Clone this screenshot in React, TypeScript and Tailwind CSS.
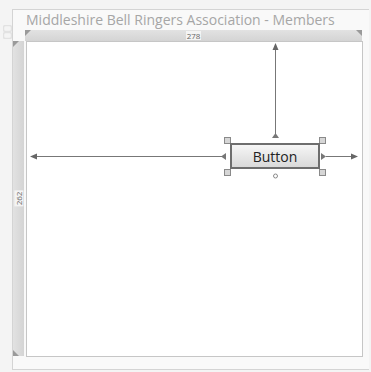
import React from "react";

export default function App() {
  return (
    <div className="relative w-[371px] h-[372px] overflow-hidden bg-[#f4f4f4] pt-[9px] pl-[12px]" style={{ fontFamily: '"Open Sans", "Noto Sans", sans-serif' }}>
      {/* faint side icon */}
      <svg className="absolute left-[3px] top-[25px]" width="9" height="14" viewBox="0 0 9 14">
        <rect x="0.5" y="0.5" width="8" height="6" rx="2" fill="none" stroke="#e2e2e2" strokeWidth="1.5" />
        <rect x="0.5" y="7.5" width="8" height="6" rx="2" fill="none" stroke="#e2e2e2" strokeWidth="1.5" />
      </svg>
      <div className="flex flex-col w-[357px] h-[361px] border-l border-t border-b border-[#d4d4d4] bg-[#f9f9f9]">
        <div className="h-[20px] pl-[13px] text-[14px] leading-[20px] text-[#a6a6a6] whitespace-nowrap">
          Middleshire Bell Ringers Association - Members
        </div>
        <div className="flex">
          <div className="w-[12px]" />
          <div className="relative w-[337px] h-[11px] bg-gradient-to-b from-[#e2e2e2] to-[#d4d4d4] flex items-center justify-center">
            <svg className="absolute left-0 top-0" width="6" height="6" viewBox="0 0 6 6">
              <polygon points="0,0 6,0 0,6" fill="#9a9a9a" />
            </svg>
            <svg className="absolute right-0 top-0" width="6" height="6" viewBox="0 0 6 6">
              <polygon points="0,0 6,0 6,6" fill="#9a9a9a" />
            </svg>
            <span className="bg-[#f4f4f4] px-[1px] text-[8px] leading-[9px] text-[#666]">278</span>
          </div>
        </div>
        <div className="flex">
          <div className="relative w-[11px] h-[315px] bg-gradient-to-r from-[#e2e2e2] to-[#d4d4d4] flex items-center justify-center">
            <svg className="absolute left-0 top-0" width="6" height="6" viewBox="0 0 6 6">
              <polygon points="0,0 6,0 0,6" fill="#9a9a9a" />
            </svg>
            <svg className="absolute left-0 bottom-0" width="6" height="6" viewBox="0 0 6 6">
              <polygon points="0,0 6,6 0,6" fill="#9a9a9a" />
            </svg>
            <span className="-rotate-90 bg-[#f4f4f4] px-[1px] text-[8px] leading-[9px] text-[#666]">262</span>
          </div>
          <div className="w-[2px]" />
          <div className="relative w-[337px] h-[316px] border border-[#c6c6c6] bg-white">
            <svg className="absolute left-0 top-0" width="335" height="314" viewBox="27 42 335 314">
              {/* left arrow */}
              <line x1="33" y1="156.5" x2="222" y2="156.5" stroke="#777" strokeWidth="1" />
              <polygon points="30,156.5 37,153.5 37,159.5" fill="#666" />
              <polygon points="221,156.5 226,153 226,160" fill="#777" />
              {/* right arrow */}
              <polygon points="326,156.5 321,153 321,160" fill="#777" />
              <line x1="326" y1="156.5" x2="353" y2="156.5" stroke="#777" strokeWidth="1" />
              <polygon points="358,156.5 351,153.5 351,159.5" fill="#666" />
              {/* top arrow */}
              <line x1="275.5" y1="48" x2="275.5" y2="134" stroke="#777" strokeWidth="1" />
              <polygon points="275.5,43 272.5,50 278.5,50" fill="#666" />
              <polygon points="275.5,133 272,138 279,138" fill="#777" />
              {/* handles */}
              <rect x="224.5" y="137.5" width="6" height="6" fill="#d6d6d6" stroke="#8a8a8a" />
              <rect x="319.5" y="137.5" width="6" height="6" fill="#d6d6d6" stroke="#8a8a8a" />
              <rect x="224.5" y="169.5" width="6" height="6" fill="#d6d6d6" stroke="#8a8a8a" />
              <rect x="319.5" y="169.5" width="6" height="6" fill="#d6d6d6" stroke="#8a8a8a" />
              <circle cx="275.5" cy="176" r="2" fill="#fff" stroke="#8a8a8a" />
            </svg>
            <div className="absolute left-[203px] top-[101px] w-[90px] h-[26px] border-2 border-[#6e6e6e] bg-gradient-to-b from-[#f6f6f6] to-[#d9d9d9] flex items-center justify-center text-[14px] text-[#222]">
              Button
            </div>
          </div>
        </div>
      </div>
    </div>
  );
}
